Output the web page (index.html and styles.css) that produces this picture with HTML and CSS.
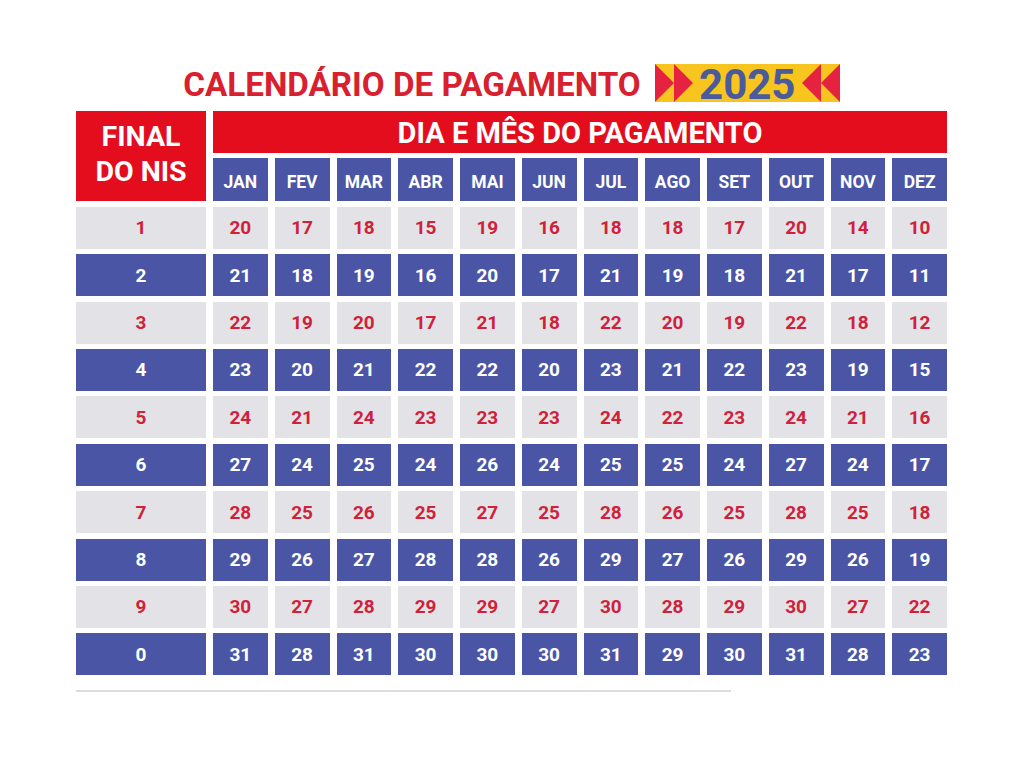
FILE: index.html
```html
<!DOCTYPE html>
<html lang="pt-BR">
<head>
<meta charset="utf-8">
<title>Calendário de Pagamento 2025</title>
<link rel="stylesheet" href="styles.css">
</head>
<body>
<main class="page">
  <header class="title-row">
    <h1 class="title">CALENDÁRIO DE PAGAMENTO</h1>
    <div class="badge">
      <svg class="arrows" width="38" height="38" viewBox="0 0 38 38"><polygon points="0,0 19,19 0,38"/><polygon points="19,0 38,19 19,38"/></svg>
      <span class="year">2025</span>
      <svg class="arrows" width="38" height="38" viewBox="0 0 38 38"><polygon points="19,0 0,19 19,38"/><polygon points="38,0 19,19 38,38"/></svg>
    </div>
  </header>

  <section class="grid">
    <div class="cell nis-head">FINAL<br>DO NIS</div>
    <div class="cell pay-head">DIA E MÊS DO PAGAMENTO</div>
    <div class="months">
      <div class="cell">JAN</div><div class="cell">FEV</div><div class="cell">MAR</div><div class="cell">ABR</div><div class="cell">MAI</div><div class="cell">JUN</div><div class="cell">JUL</div><div class="cell">AGO</div><div class="cell">SET</div><div class="cell">OUT</div><div class="cell">NOV</div><div class="cell">DEZ</div>
    </div>

    <div class="row light"><div class="cell">1</div><div class="cell">20</div><div class="cell">17</div><div class="cell">18</div><div class="cell">15</div><div class="cell">19</div><div class="cell">16</div><div class="cell">18</div><div class="cell">18</div><div class="cell">17</div><div class="cell">20</div><div class="cell">14</div><div class="cell">10</div></div>
    <div class="row dark"><div class="cell">2</div><div class="cell">21</div><div class="cell">18</div><div class="cell">19</div><div class="cell">16</div><div class="cell">20</div><div class="cell">17</div><div class="cell">21</div><div class="cell">19</div><div class="cell">18</div><div class="cell">21</div><div class="cell">17</div><div class="cell">11</div></div>
    <div class="row light"><div class="cell">3</div><div class="cell">22</div><div class="cell">19</div><div class="cell">20</div><div class="cell">17</div><div class="cell">21</div><div class="cell">18</div><div class="cell">22</div><div class="cell">20</div><div class="cell">19</div><div class="cell">22</div><div class="cell">18</div><div class="cell">12</div></div>
    <div class="row dark"><div class="cell">4</div><div class="cell">23</div><div class="cell">20</div><div class="cell">21</div><div class="cell">22</div><div class="cell">22</div><div class="cell">20</div><div class="cell">23</div><div class="cell">21</div><div class="cell">22</div><div class="cell">23</div><div class="cell">19</div><div class="cell">15</div></div>
    <div class="row light"><div class="cell">5</div><div class="cell">24</div><div class="cell">21</div><div class="cell">24</div><div class="cell">23</div><div class="cell">23</div><div class="cell">23</div><div class="cell">24</div><div class="cell">22</div><div class="cell">23</div><div class="cell">24</div><div class="cell">21</div><div class="cell">16</div></div>
    <div class="row dark"><div class="cell">6</div><div class="cell">27</div><div class="cell">24</div><div class="cell">25</div><div class="cell">24</div><div class="cell">26</div><div class="cell">24</div><div class="cell">25</div><div class="cell">25</div><div class="cell">24</div><div class="cell">27</div><div class="cell">24</div><div class="cell">17</div></div>
    <div class="row light"><div class="cell">7</div><div class="cell">28</div><div class="cell">25</div><div class="cell">26</div><div class="cell">25</div><div class="cell">27</div><div class="cell">25</div><div class="cell">28</div><div class="cell">26</div><div class="cell">25</div><div class="cell">28</div><div class="cell">25</div><div class="cell">18</div></div>
    <div class="row dark"><div class="cell">8</div><div class="cell">29</div><div class="cell">26</div><div class="cell">27</div><div class="cell">28</div><div class="cell">28</div><div class="cell">26</div><div class="cell">29</div><div class="cell">27</div><div class="cell">26</div><div class="cell">29</div><div class="cell">26</div><div class="cell">19</div></div>
    <div class="row light"><div class="cell">9</div><div class="cell">30</div><div class="cell">27</div><div class="cell">28</div><div class="cell">29</div><div class="cell">29</div><div class="cell">27</div><div class="cell">30</div><div class="cell">28</div><div class="cell">29</div><div class="cell">30</div><div class="cell">27</div><div class="cell">22</div></div>
    <div class="row dark"><div class="cell">0</div><div class="cell">31</div><div class="cell">28</div><div class="cell">31</div><div class="cell">30</div><div class="cell">30</div><div class="cell">30</div><div class="cell">31</div><div class="cell">29</div><div class="cell">30</div><div class="cell">31</div><div class="cell">28</div><div class="cell">23</div></div>
  </section>

  <div class="rule"></div>
</main>
</body>
</html>
```

FILE: styles.css
```css
* { box-sizing: border-box; }

html, body {
  margin: 0;
  padding: 0;
  background: #ffffff;
}

body {
  font-family: Roboto, "Liberation Sans", Arial, sans-serif;
  font-weight: 700;
}

.page {
  width: 1024px;
  height: 768px;
  padding: 64px 77px 0 76px;
}

.title-row {
  display: flex;
  justify-content: center;
  align-items: center;
  gap: 14px;
  height: 38px;
  margin: 0 0 9px 0;
}

.title {
  margin: 0;
  font-size: 33.2px;
  line-height: 38px;
  font-weight: 700;
  color: #d8202e;
  padding-top: 3px;
  white-space: nowrap;
}

.badge {
  display: flex;
  align-items: center;
  justify-content: space-between;
  width: 185px;
  height: 38px;
  background: #f7c51e;
}

.arrows {
  display: block;
  fill: #e5223f;
}

.year {
  font-size: 42px;
  line-height: 38px;
  color: #4b5a9c;
  padding-top: 3px;
}

.grid {
  display: grid;
  grid-template-columns: 130px repeat(12, 1fr);
  grid-template-rows: 42px 43px repeat(10, 42px);
  column-gap: 7px;
  row-gap: 5.4px;
  width: 871px;
}

.months,
.row {
  display: contents;
}

.cell {
  display: flex;
  align-items: center;
  justify-content: center;
  min-width: 0;
}

.nis-head {
  grid-column: 1;
  grid-row: 1 / span 2;
  background: #e30d1e;
  color: #ffffff;
  font-size: 28.5px;
  line-height: 35px;
  text-align: center;
  padding-bottom: 4px;
}

.pay-head {
  grid-column: 2 / span 12;
  grid-row: 1;
  background: #e30d1e;
  color: #ffffff;
  font-size: 29px;
  padding-top: 2px;
  white-space: nowrap;
}

.months .cell {
  background: #4b55a6;
  color: #ffffff;
  font-size: 17.5px;
  padding-top: 4px;
}

.row .cell {
  font-size: 19px;
}

.row.light .cell {
  background: #e3e3e7;
  color: #d0213b;
}

.row.dark .cell {
  background: #4b55a6;
  color: #ffffff;
}

.rule {
  width: 655px;
  height: 2px;
  margin-top: 15px;
  background: #dcdce0;
}
```
